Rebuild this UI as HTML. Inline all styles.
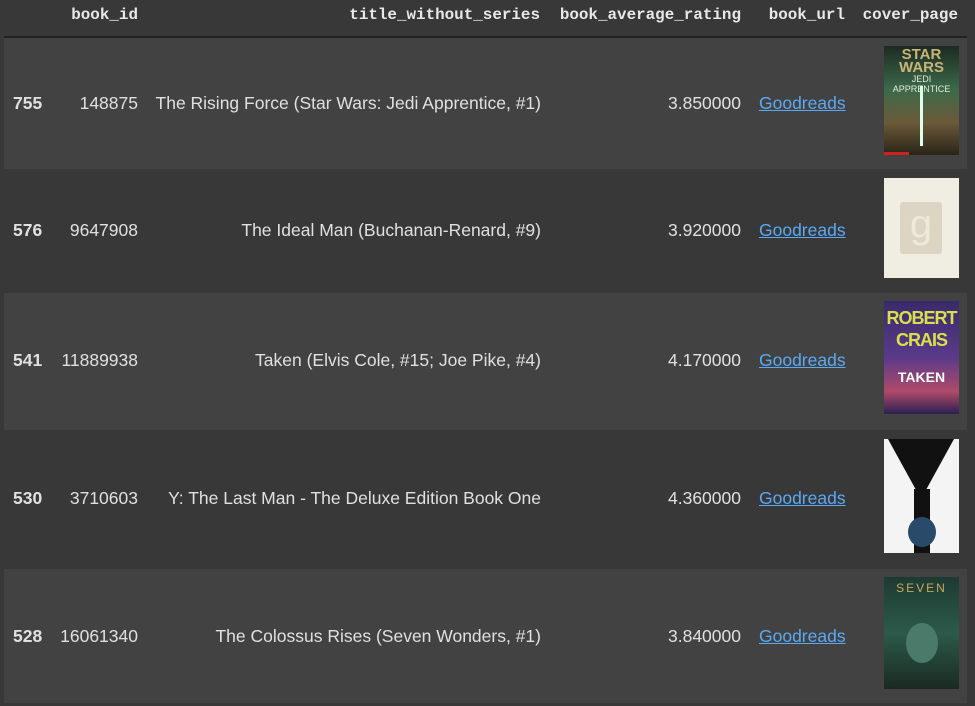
<!DOCTYPE html>
<html><head><style>
body{margin:0;width:975px;height:706px;background:#383838;position:relative;overflow:hidden;font-family:"Liberation Sans",Arial,sans-serif;color:#e0e0e0;font-size:17.5px}
.h{position:absolute;top:6px;font-family:"Liberation Mono",monospace;font-weight:bold;font-size:15.9px;color:#e8e8e8;white-space:nowrap}
.line{position:absolute;left:4px;top:36px;width:963px;height:2px;background:#222}
.row{position:absolute;left:4px;width:963px}
.t{position:absolute;white-space:nowrap}
.r{text-align:right}
.idx{font-weight:bold;left:13px}
a{color:#5aa9f5;text-decoration:underline}
.cov{position:absolute;left:884px;width:75px;overflow:hidden}
</style></head><body>
<div class="h" style="right:837px">book_id</div>
<div class="h" style="right:435px">title_without_series</div>
<div class="h" style="right:234px">book_average_rating</div>
<div class="h" style="right:130px">book_url</div>
<div class="h" style="right:17px">cover_page</div>
<div class="line"></div>

<div class="row" style="top:38px;height:131px;background:#424242"></div>
<div class="row" style="top:169px;height:124px;background:#383838"></div>
<div class="row" style="top:293px;height:137px;background:#424242"></div>
<div class="row" style="top:430px;height:139px;background:#383838"></div>
<div class="row" style="top:569px;height:134px;background:#424242"></div>

<div class="t idx" style="top:93px">755</div>
<div class="t r" style="top:93px;right:837px">148875</div>
<div class="t r" style="top:93px;right:434px">The Rising Force (Star Wars: Jedi Apprentice, #1)</div>
<div class="t r" style="top:93px;right:234px">3.850000</div>
<div class="t" style="top:93px;left:759px"><a>Goodreads</a></div>

<div class="t idx" style="top:220px">576</div>
<div class="t r" style="top:220px;right:837px">9647908</div>
<div class="t r" style="top:220px;right:434px">The Ideal Man (Buchanan-Renard, #9)</div>
<div class="t r" style="top:220px;right:234px">3.920000</div>
<div class="t" style="top:220px;left:759px"><a>Goodreads</a></div>

<div class="t idx" style="top:350px">541</div>
<div class="t r" style="top:350px;right:837px">11889938</div>
<div class="t r" style="top:350px;right:434px">Taken (Elvis Cole, #15; Joe Pike, #4)</div>
<div class="t r" style="top:350px;right:234px">4.170000</div>
<div class="t" style="top:350px;left:759px"><a>Goodreads</a></div>

<div class="t idx" style="top:488px">530</div>
<div class="t r" style="top:488px;right:837px">3710603</div>
<div class="t r" style="top:488px;right:434px">Y: The Last Man - The Deluxe Edition Book One</div>
<div class="t r" style="top:488px;right:234px">4.360000</div>
<div class="t" style="top:488px;left:759px"><a>Goodreads</a></div>

<div class="t idx" style="top:626px">528</div>
<div class="t r" style="top:626px;right:837px">16061340</div>
<div class="t r" style="top:626px;right:434px">The Colossus Rises (Seven Wonders, #1)</div>
<div class="t r" style="top:626px;right:234px">3.840000</div>
<div class="t" style="top:626px;left:759px"><a>Goodreads</a></div>

<div class="cov" style="top:46px;height:109px;background:linear-gradient(#1d2a22,#3c6a4a 40%,#6b5a3a 70%,#2a2418)">
 <div style="position:absolute;top:2px;width:100%;text-align:center;color:#c9b477;font-weight:bold;font-size:15px;line-height:13px">STAR<br>WARS</div>
 <div style="position:absolute;top:28px;width:100%;text-align:center;color:#e8e8d8;font-size:9px">JEDI APPRENTICE</div>
 <div style="position:absolute;left:36px;top:40px;width:3px;height:60px;background:#dfe"></div>
 <div style="position:absolute;bottom:0;left:0;width:25px;height:3px;background:#c22"></div>
</div>
<div class="cov" style="top:178px;height:100px;background:#f0ede2">
 <div style="position:absolute;left:16px;top:24px;width:42px;height:52px;background:#ddd5c4;border-radius:3px;color:#efe9dc;font-size:40px;text-align:center;line-height:44px">g</div>
</div>
<div class="cov" style="top:301px;height:113px;background:linear-gradient(#3a2a6a,#5a3a8a 50%,#b04a6a 80%,#2a2050)">
 <div style="position:absolute;top:6px;width:100%;text-align:center;color:#d8e04a;font-weight:bold;font-size:18px;line-height:22px;letter-spacing:-1px">ROBERT<br>CRAIS</div>
 <div style="position:absolute;top:68px;width:100%;text-align:center;color:#fff;font-weight:bold;font-size:14px">TAKEN</div>
</div>
<div class="cov" style="top:439px;height:114px;background:#f4f4f4">
 <div style="position:absolute;left:4px;top:0;width:0;height:0;border-left:33px solid transparent;border-right:33px solid transparent;border-top:60px solid #111"></div>
 <div style="position:absolute;left:30px;top:50px;width:16px;height:64px;background:#111"></div>
 <div style="position:absolute;left:24px;top:78px;width:28px;height:30px;background:#2a4a6a;border-radius:50%"></div>
</div>
<div class="cov" style="top:577px;height:112px;background:linear-gradient(#1e3a32,#2c5a4a 50%,#1a2a22)">
 <div style="position:absolute;top:4px;width:100%;text-align:center;color:#c8a85a;font-size:12px;letter-spacing:2px">SEVEN</div>
 <div style="position:absolute;top:46px;left:22px;width:32px;height:40px;border-radius:50%;background:#4a7a6a"></div>
</div>
</body></html>
